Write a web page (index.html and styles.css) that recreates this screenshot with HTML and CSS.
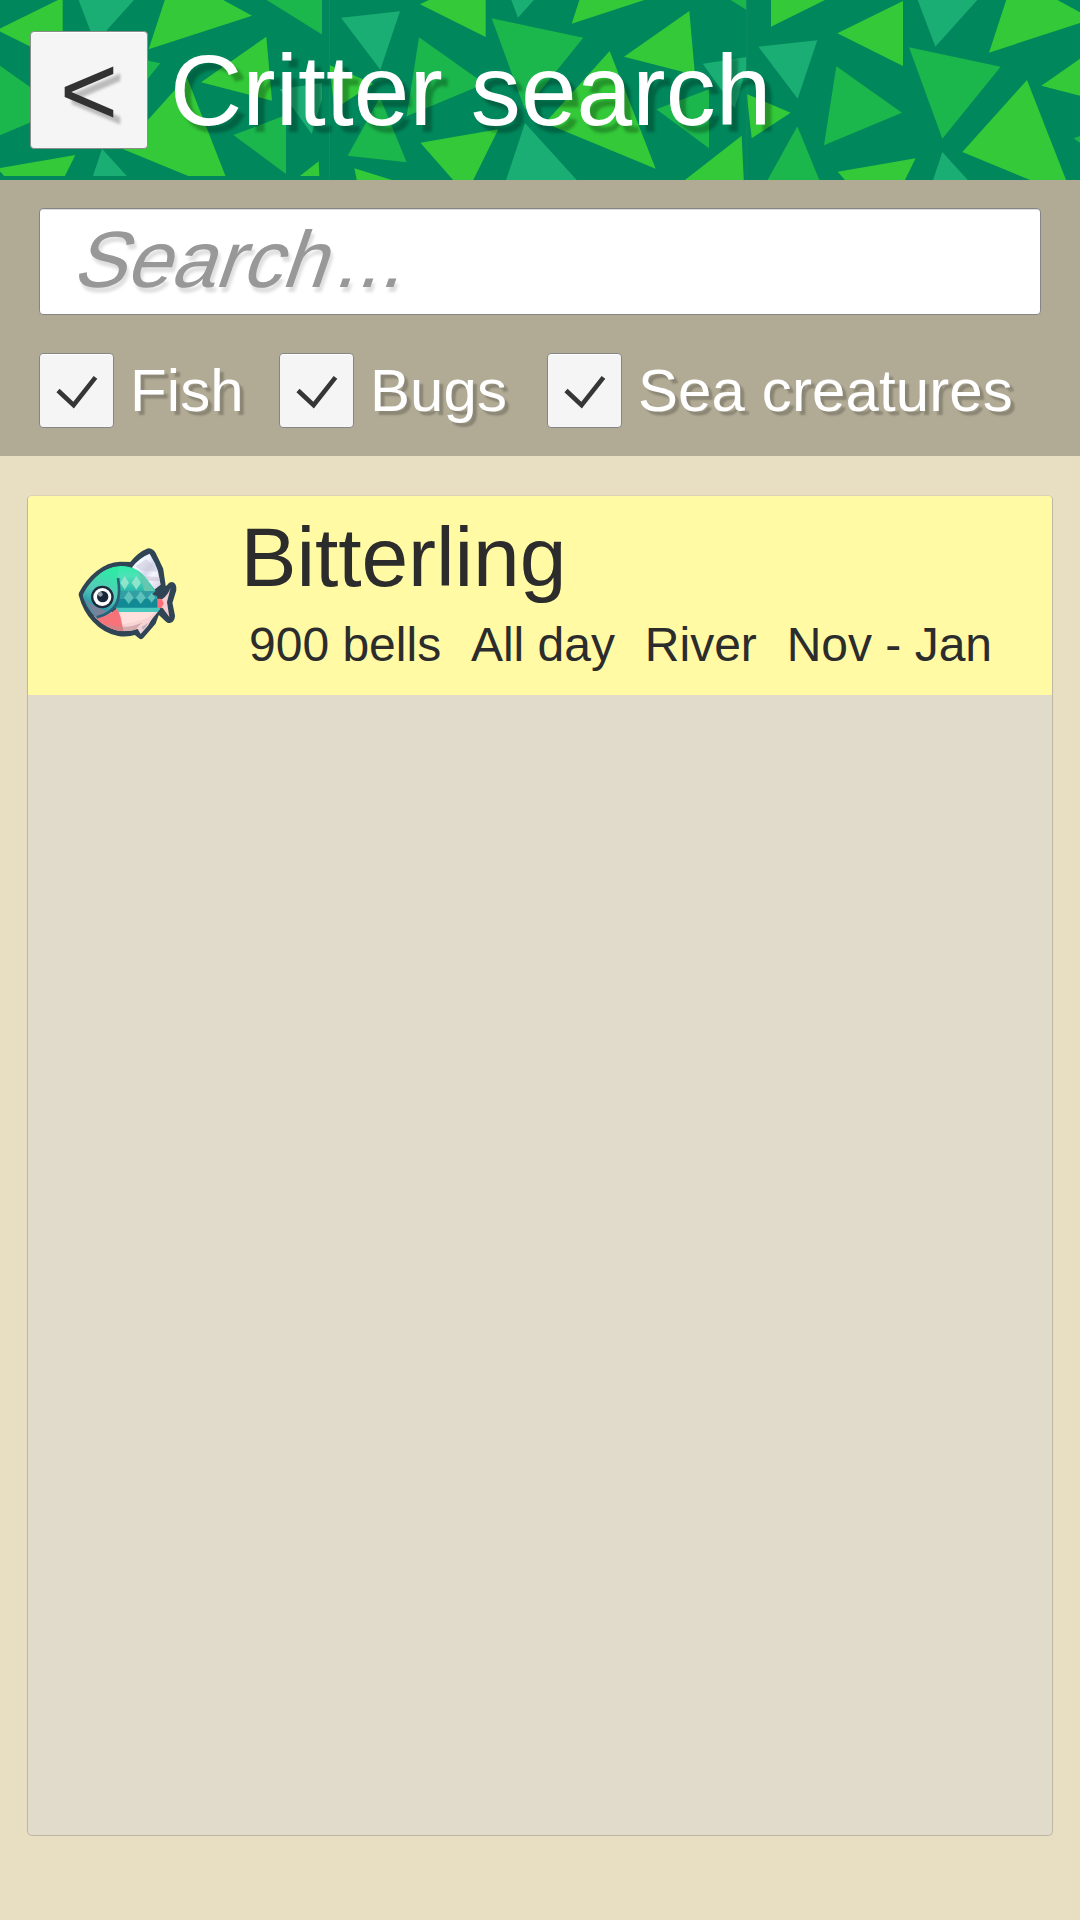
FILE: index.html
```html
<!DOCTYPE html>
<html lang="en">
<head>
<meta charset="utf-8">
<title>Critter search</title>
<link rel="stylesheet" href="styles.css">
</head>
<body>
<svg class="defs" width="0" height="0" aria-hidden="true">
  <defs>
    <clipPath id="tile-clip"><rect x="140" y="0" width="1252" height="640"/></clipPath>
    <clipPath id="tile-short"><rect x="140" y="0" width="1247" height="538"/></clipPath>
    <g id="tile">
      <g fill="#33c939">
        <path d="M213 80V-20H415L375 0Z"/>
        <path d="M412 100 609 3V198Z"/>
        <path d="M867 158 922-10H1054L1177 57Z"/>
        <path d="M981 240 787 456 1119 593Z"/>
        <path d="M1024 257 1220 120 1237 312Z"/>
        <path d="M140 282 272 338 155 415Z"/>
        <path d="M1377 494 1190 640H1384Z"/>
        <path d="M413 515 647 475 550 671Z"/>
        <path d="M215 592 370 640H225Z"/>
      </g>
      <g fill="#1bb64c">
        <path d="M627 142 902 200 727 416Z"/>
        <path d="M409 199 606 338 372 436Z"/>
        <path d="M1205 0H1392V117Z"/>
        <path d="M1121 415 1279 355V532Z"/>
        <path d="M292 379 195 554 372 574Z"/>
      </g>
      <g fill="#1aad74">
        <path d="M175 140 352 121 293 296Z"/>
        <path d="M653 0H832L706 140Z"/>
        <path d="M1260 278 1392 258V290L1356 412Z"/>
        <path d="M727 456 666 640H894Z"/>
      </g>
    </g>
    <symbol id="tick" viewBox="0 0 75 75">
      <path d="M18.500 37.500 34.500 52.500 57 24" fill="none" stroke="#363636" stroke-width="4.800"/>
    </symbol>
  </defs>
</svg>

<header class="header">
  <svg class="pattern" viewBox="0 0 3240 540" aria-hidden="true">
    <g transform="translate(-421 -10)"><g clip-path="url(#tile-short)"><use href="#tile"/></g></g>
    <g transform="translate(848 -87)"><g clip-path="url(#tile-clip)"><use href="#tile"/></g></g>
    <g transform="translate(2100 0)"><g clip-path="url(#tile-clip)"><use href="#tile"/></g></g>
    <path d="M988.500 0V540M2240.500 0V540" stroke="#118b60" stroke-width="3"/>
  </svg>
  <button class="back" type="button">&lt;</button>
  <h1 class="title">Critter search</h1>
</header>

<section class="filters">
  <div class="search"><span class="placeholder">Search<span class="dots">...</span></span></div>
  <div class="checks">
    <div class="check fish"><span class="box"><svg><use href="#tick"/></svg></span>Fish</div>
    <div class="check bugs"><span class="box"><svg><use href="#tick"/></svg></span>Bugs</div>
    <div class="check"><span class="box"><svg><use href="#tick"/></svg></span>Sea creatures</div>
  </div>
</section>

<main class="list">
  <article class="row">
    <svg class="critter" viewBox="0 0 420 390" role="img" aria-label="Bitterling">
      <defs>
        <linearGradient id="body" x1="0" y1="0" x2="0" y2="1">
          <stop offset="0" stop-color="#27f0a4"/><stop offset=".3" stop-color="#4fe0b8"/>
          <stop offset=".6" stop-color="#2cb9ac"/><stop offset="1" stop-color="#0f858e"/>
        </linearGradient>
        <linearGradient id="head" x1=".6" y1="0" x2=".3" y2="1">
          <stop offset="0" stop-color="#2deaa5"/><stop offset=".45" stop-color="#55cbb8"/>
          <stop offset=".75" stop-color="#2c9aa8"/><stop offset="1" stop-color="#777d9a"/>
        </linearGradient>
        <linearGradient id="fin" x1="0" y1="0" x2="1" y2="1">
          <stop offset="0" stop-color="#fff"/><stop offset=".35" stop-color="#eef5ff"/>
          <stop offset=".5" stop-color="#d5d6ea"/><stop offset=".65" stop-color="#f4f6ff"/><stop offset="1" stop-color="#d5d0e0"/>
        </linearGradient>
        <clipPath id="body-clip"><path d="M68 196C92 150 130 112 180 108Q232 106 263 150L288 184 302 207 300 238 272 272Q232 308 180 303C125 293 84 250 68 196Z"/></clipPath>
      </defs>
      <g fill="#2f4454" stroke="#2f4454" stroke-width="20" stroke-linejoin="round">
        <path d="M66 193C90 145 135 106 180 105L216 106Q238 76 266 65 275 65 281 79L300 119 308 174Q320 185 333 167 340 164 339 179L327 218 335 258Q334 272 325 268L302 246 289 246 278 276 243 317 227 304Q200 313 176 308C121 298 80 249 66 193Z"/>
      </g>
      <path d="M216 112Q238 83 269 71 286 98 294 124L302 164 282 180 258 150Z" fill="url(#fin)"/>
      <path d="M226 109 258 88 291 113 293 125 244 122Z" fill="#c7c4d6" opacity=".5"/>
      <path d="M248 138 298 142 300 154 262 152Z" fill="#c7bccd" opacity=".5"/>
      <path d="M229 290 285 249 265 286 242 312Z" fill="#edd1d7"/>
      <path d="M243 286 249 299 263 282 260 273Z" fill="#bfaebd"/>
      <path d="M286 207 307 207Q324 195 332 173L321 216 328 261 308 234 286 233Z" fill="#f5cbd0"/>
      <path d="M285 206H305L311 220 304 235H285Z" fill="#ff6e76"/>
      <g clip-path="url(#body-clip)">
        <path d="M60 100H290V234H60Z" fill="url(#body)"/>
        <path d="M174 183H292V207H174Z" fill="#319fa3"/>
        <path d="M174 207H292V233H174Z" fill="#118a96"/>
        <path d="M222 106 256 144 284 183H252Q246 138 222 106Z" fill="#65c8ae"/>
        <path d="M168 233H302V246H168Z" fill="#49c9be"/>
        <path d="M103 246H302V310H103Z" fill="#f7d3d3"/>
        <path d="M180 246H284Q270 270 188 282Z" fill="#ffe0dc"/>
        <path d="M109 261Q145 260 172 234L182 263 191 306H140Z" fill="#f87379"/>
        <path d="M133 280Q190 302 246 278L220 306H165Z" fill="#b98c92" opacity=".55"/>
        <path d="M60 192Q93 145 137 116 157 107 174 112V190Q169 239 112 266L60 220Z" fill="url(#head)"/>
        <path d="M70 205Q106 236 141 242L112 263Z" fill="#7a819a"/>
        <path d="M174 144Q181 188 173 211 163 248 110 262" fill="none" stroke="#2b6177" stroke-width="8"/>
        <g fill="#9ee8d0" opacity=".85">
          <path d="M194 138 207 158 194 179 181 158ZM229 138 243 158 229 179 215 158Z"/>
        </g>
        <g fill="#65c9c0" opacity=".85">
          <path d="M206 183 221 203 206 222 192 203ZM242 183 257 203 242 222 228 203ZM275 188 286 203 275 218 263 203Z"/>
        </g>
      </g>
      <path d="M277 193 304 166 321 172 306 208Q294 198 277 193Z" fill="#2f4454"/>
      <circle cx="127" cy="201" r="34" fill="#1d2b3c"/>
      <circle cx="127" cy="201" r="27" fill="#fff"/>
      <circle cx="128" cy="200" r="17" fill="#172536"/>
      <circle cx="121" cy="193" r="7" fill="#909ba5"/>
    </svg>
    <div class="info">
      <h2 class="name">Bitterling</h2>
      <div class="facts"><span>900 bells</span><span>All day</span><span>River</span><span>Nov - Jan</span></div>
    </div>
  </article>
</main>
</body>
</html>
```
FILE: styles.css
```css
* {
  box-sizing: border-box;
}

body {
  margin: 0;
  height: 1920px;
  display: flex;
  flex-direction: column;
  background: #e8dec2;
  color: #2c2c2c;
  font-family: "Liberation Sans", Arial, sans-serif;
  font-kerning: none;
}

h1,
h2 {
  margin: 0;
  font-weight: 400;
}

.defs {
  position: absolute;
}

.header {
  position: relative;
  flex: none;
  height: 180px;
  padding-left: 30px;
  display: flex;
  align-items: center;
  gap: 22px;
  background: #00875b;
  overflow: hidden;
}

.pattern {
  position: absolute;
  inset: 0;
  width: 1080px;
  height: 180px;
}

.back {
  position: relative;
  width: 118px;
  height: 118px;
  padding: 0;
  border: 1px solid #8d8d8d;
  border-radius: 4px;
  background: #f5f5f5;
  box-shadow: inset 0 1px #fff;
  color: #323232;
  font: 100px/116px "Liberation Sans", Arial, sans-serif;
  text-shadow: 7px 7px 3px rgba(0, 0, 0, 0.24);
}

.title {
  position: relative;
  color: #fff;
  font-size: 100px;
  line-height: 116px;
  letter-spacing: 0.1px;
  text-shadow: 6.5px 6.5px 3px rgba(0, 0, 0, 0.26);
}

.filters {
  flex: none;
  height: 276px;
  padding: 28px 39px 0;
  display: flex;
  flex-direction: column;
  gap: 38px;
  background: #b1ab95;
}

.search {
  height: 107px;
  padding-left: 31px;
  border: 1px solid #858585;
  border-radius: 4px;
  background: #fff;
  box-shadow: inset 0 1px #ddd;
}

.placeholder {
  display: inline-block;
  color: #989898;
  font-size: 80px;
  line-height: 102px;
  transform: skewX(-19deg);
  transform-origin: 0 78px;
  text-shadow: 4px 5px 3px rgba(0, 0, 0, 0.13);
}

.dots {
  margin-left: 8px;
  letter-spacing: 0.8px;
}

.checks {
  display: flex;
}

.check {
  display: flex;
  align-items: center;
  gap: 16px;
  color: #fff;
  font-size: 60px;
  line-height: 75px;
  letter-spacing: 0.1px;
  text-shadow: 4px 4px 2px rgba(0, 0, 0, 0.22);
}

.fish {
  width: 240px;
}

.bugs {
  width: 268px;
}

.box {
  flex: none;
  width: 75px;
  height: 75px;
  border: 1px solid #858585;
  border-radius: 4px;
  background: #f5f5f5;
  box-shadow: inset 0 1px #fff;
}

.box svg {
  display: block;
  width: 73px;
  height: 73px;
}

.list {
  flex: none;
  height: 1341px;
  margin: 39px 27px 0;
  border: 1px solid #bdb7a2;
  border-top-color: #ddd2b4;
  border-radius: 5px;
  background: #e1dbcb;
  overflow: hidden;
}

.row {
  height: 199px;
  padding-left: 31.500px;
  display: flex;
  align-items: flex-start;
  background: #fffaa3;
}

.critter {
  flex: none;
  width: 140px;
  height: 130px;
  margin-top: 34px;
}

.info {
  padding: 11px 0 0 41px;
}

.name {
  font-size: 84px;
  line-height: 100px;
  letter-spacing: -0.1px;
}

.facts {
  padding: 9px 0 0 8.500px;
  display: flex;
  gap: 29.800px;
  font-size: 48px;
  line-height: 58px;
  white-space: nowrap;
}
```
